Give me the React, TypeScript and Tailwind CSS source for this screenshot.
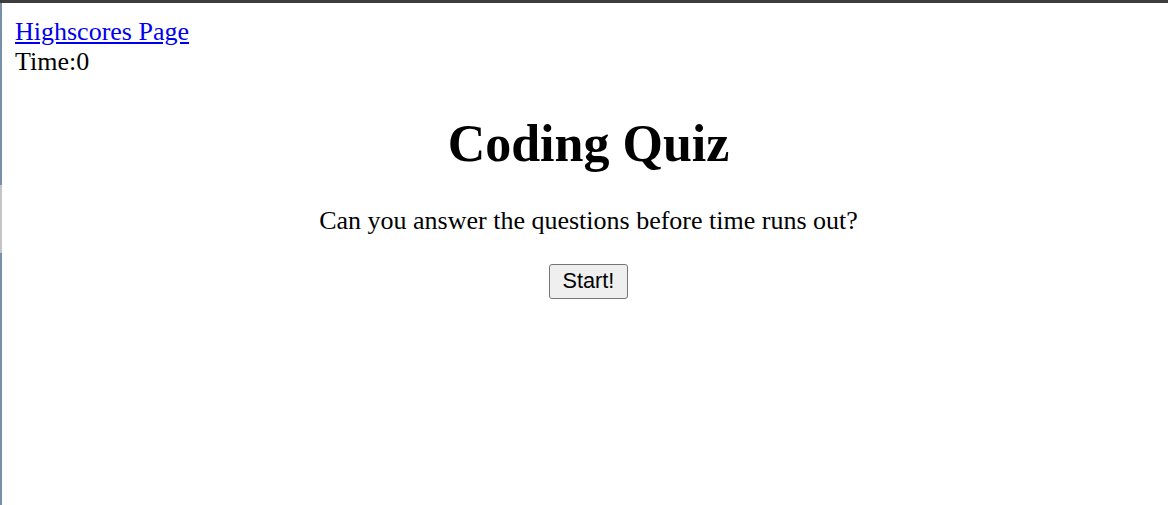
import React from "react";

/** Serif stack that matches the browser default (Times New Roman metrics) */
const SERIF = "font-['Liberation_Serif','Times_New_Roman',serif]";

function SideStrip() {
  return (
    <div className="flex w-[2px] shrink-0 flex-col">
      <div className="h-[182px] bg-[#7790a8]" />
      <div className="h-[68px] bg-[#c4c4c4]" />
      <div className="flex-1 bg-[#7790a8]" />
    </div>
  );
}

function App() {
  const time = 0;

  return (
    <div className="flex min-h-screen flex-col bg-white text-black">
      <div className="h-[3px] shrink-0 bg-[#3d3d3d]" />
      <div className="flex flex-1">
        <SideStrip />
        <main className={`${SERIF} flex-1 pt-[14px] pr-[6px] pl-[13px] text-[26px] leading-[1.15]`}>
          <a href="#" className="text-[#0000ee] underline">
            Highscores Page
          </a>
          <div>Time:{time}</div>

          <section className="text-center">
            <h1 className="mt-[37px] mb-[32px] text-[52px] leading-[1.15] font-bold">Coding Quiz</h1>
            <p className="mt-[32px] mb-[29px]">Can you answer the questions before time runs out?</p>
            <button className="rounded-[3px] border border-[#767676] bg-[#efefef] px-[13px] py-[4px] font-['Liberation_Sans',Arial,sans-serif] text-[21.67px] leading-[1.15] hover:bg-[#e5e5e5]">
              Start!
            </button>
          </section>
        </main>
      </div>
    </div>
  );
}

export default App;
